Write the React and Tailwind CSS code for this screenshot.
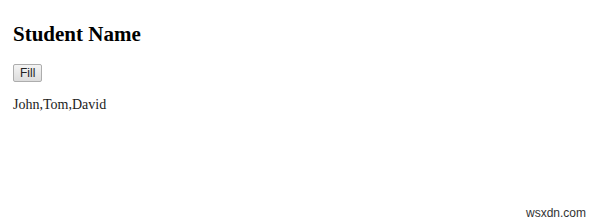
import React from "react";

export default function App() {
  const names = ["John", "Tom", "David"];

  return (
    <div className="relative w-[600px] h-[223px] bg-white overflow-hidden">
      <div className="px-[13px] pt-[22px]">
        <h3 className="text-[21px] leading-[24px] font-bold text-black font-['Liberation_Serif',serif]">
          Student Name
        </h3>
        <button className="mt-[18px] h-[18px] px-[6px] flex items-center border border-[#adadad] rounded-[2px] bg-gradient-to-b from-[#f4f4f4] to-[#dcdcdc] text-[12px] leading-none text-[#222] font-['Liberation_Sans',sans-serif]">
          Fill
        </button>
        <p className="mt-[15px] text-[14px] leading-[16px] text-[#222] font-['Liberation_Serif',serif]">
          {names.join(",")}
        </p>
      </div>
      <span className="absolute left-[526px] top-[205px] text-[12px] leading-[16px] text-[#333] font-['Liberation_Sans',sans-serif]">
        wsxdn.com
      </span>
    </div>
  );
}
